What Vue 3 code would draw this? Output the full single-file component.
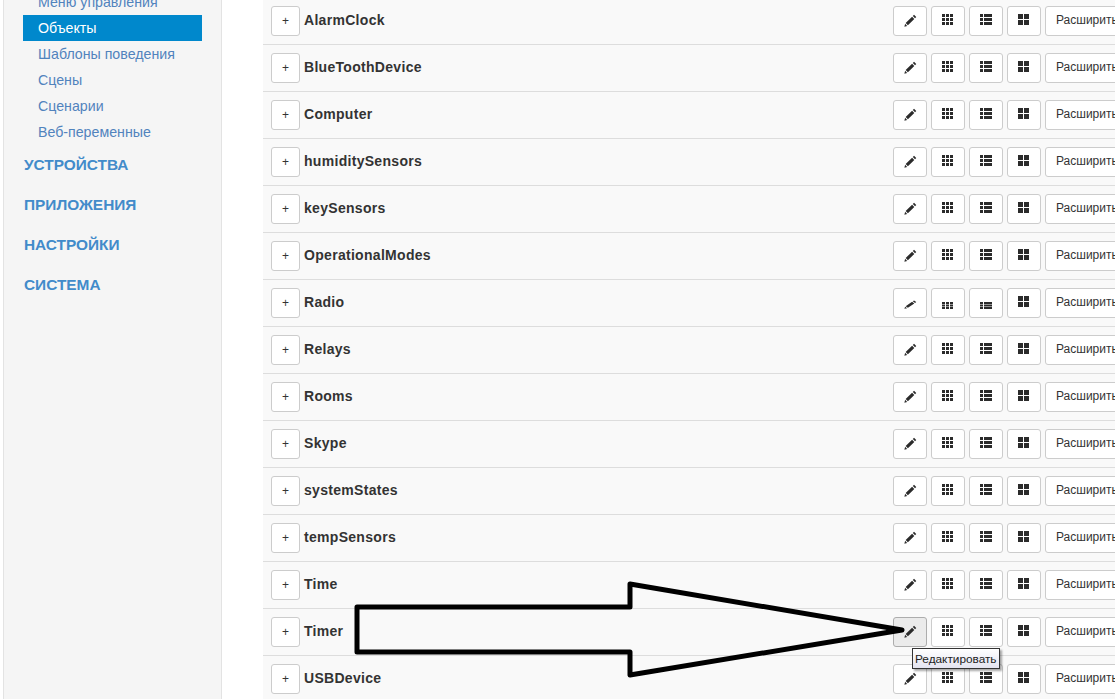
<script setup>
const links = ['Меню управления', 'Объекты', 'Шаблоны поведения', 'Сцены', 'Сценарии', 'Веб-переменные']
const heads = ['УСТРОЙСТВА', 'ПРИЛОЖЕНИЯ', 'НАСТРОЙКИ', 'СИСТЕМА']
const rows = ['AlarmClock', 'BlueToothDevice', 'Computer', 'humiditySensors', 'keySensors', 'OperationalModes', 'Radio', 'Relays', 'Rooms', 'Skype', 'systemStates', 'tempSensors', 'Time', 'Timer', 'USBDevice']
</script>

<template>
  <div class="page">
    <aside class="side">
      <ul class="links">
        <li v-for="l in links" :key="l" :class="{ active: l === 'Объекты' }">{{ l }}</li>
      </ul>
      <h4 v-for="h in heads" :key="h">{{ h }}</h4>
    </aside>
    <main class="list">
      <div v-for="r in rows" :key="r" class="row" :class="{ squash: r === 'Radio' }">
        <button class="btn plus">+</button>
        <b class="name">{{ r }}</b>
        <div class="acts">
          <button class="btn ic" :class="{ hover: r === 'Timer' }">
            <svg viewBox="0 0 14 14" preserveAspectRatio="none" class="g pen"><path d="M10.8 0.8 13.2 3.2 11.9 4.5 9.5 2.1ZM8.7 2.9 11.1 5.3 4.2 12.2 1.8 9.8ZM1.2 10.6 3.4 12.8 0.4 13.6Z"/></svg>
          </button>
          <button class="btn ic">
            <svg viewBox="0 0 11 11" preserveAspectRatio="none" class="g dots"><path d="M0 0h3v3H0zM4 0h3v3H4zM8 0h3v3H8zM0 4h3v3H0zM4 4h3v3H4zM8 4h3v3H8zM0 8h3v3H0zM4 8h3v3H4zM8 8h3v3H8z"/></svg>
          </button>
          <button class="btn ic">
            <svg viewBox="0 0 12 11" preserveAspectRatio="none" class="g lines"><path d="M0 0h3v3H0zM4 0h8v3H4zM0 4h3v3H0zM4 4h8v3H4zM0 8h3v3H0zM4 8h8v3H4z"/></svg>
          </button>
          <button class="btn ic noflat">
            <svg viewBox="0 0 11 11" preserveAspectRatio="none" class="g dots"><path d="M0 0h5v5H0zM6 0h5v5H6zM0 6h5v5H0zM6 6h5v5H6z"/></svg>
          </button>
          <button class="btn wide"><span class="lbl">Расширить</span></button>
        </div>
      </div>
    </main>
    <svg class="arrow" viewBox="0 0 1115 699" width="1115" height="699">
      <path d="M357 607H630V584L902 630 630 675V652H357Z" fill="none" stroke="#000" stroke-width="5" stroke-linejoin="round"/>
    </svg>
    <div class="tip">Редактировать</div>
  </div>
</template>

<style>
html, body { margin: 0; background: #fff; overflow: hidden; }
</style>

<style scoped>
.page {
  position: relative;
  width: 1115px;
  height: 699px;
  overflow: hidden;
  display: flex;
  align-items: flex-start;
  font-family: "Liberation Sans", Arial, sans-serif;
  background: #fff;
}
.side {
  height: 730px;
  margin: -20px 0 0 3px;
  flex: none;
  background: #f5f5f5;
  border: solid #e3e3e3;
  border-width: 0 1px;
  padding: 9px 19px 0;
  box-sizing: content-box;
  width: 179px;
}
.links { list-style: none; margin: 0; padding: 0; }
.links li {
  height: 26px;
  line-height: 26px;
  padding-left: 15px;
  font-size: 14.2px;
  color: #5183bd;
}
.links li.active { background: #0088cc; color: #fff; }
h4 {
  margin: 0;
  height: 40px;
  line-height: 40px;
  font-size: 15.4px;
  font-weight: bold;
  color: #428bca;
  padding-left: 1px;
}
.list {
  margin: -2px 0 0 41px;
  flex: 1;
  min-width: 0;
}
.row {
  height: 46px;
  border-bottom: 1px solid #ddd;
  background: #f9f9f9;
  display: flex;
  align-items: center;
  padding-left: 8px;
}
.btn {
  box-sizing: border-box;
  height: 30px;
  background: #fff;
  border: 1px solid #ccc;
  border-radius: 3px;
  color: #333;
  font-family: inherit;
  font-size: 12px;
  padding: 0;
  display: flex;
  align-items: center;
  justify-content: center;
  flex: none;
}
.plus { width: 29px; }
.name { margin: 0 0 2px 4px; font-size: 14px; letter-spacing: 0.3px; color: #333; }
.acts { margin-left: auto; display: flex; gap: 4px; margin-right: -32px; }
.ic { width: 34px; }
.hover { background: #ebebeb; border-color: #adadad; }
.wide { width: 102px; justify-content: flex-start; padding-left: 10px; }
.lbl { margin-bottom: 2px; }
.g { width: 13px; height: 13px; fill: #2b2b2b; margin-bottom: 2px; flex: none; }
.dots { width: 11px; height: 11px; margin-bottom: 3px; margin-right: 1px; }
.lines { width: 12px; height: 11px; margin-bottom: 3px; }
.squash .ic:not(.noflat) .g { height: 7px; margin-top: 5px; margin-bottom: 0; }
.squash .ic:not(.noflat) .pen { height: 9px; margin-top: 2px; }
.arrow { position: absolute; left: 0; top: 0; pointer-events: none; }
.tip {
  position: absolute;
  left: 912px;
  top: 648px;
  height: 21px;
  line-height: 20px;
  padding: 0 2px;
  box-sizing: border-box;
  width: 88px;
  font-size: 11.8px;
  white-space: nowrap;
  color: #222;
  background: linear-gradient(#fff, #e4e4f0);
  border: 1px solid #333;
  box-shadow: 2px 2px 2px rgba(0,0,0,.35);
}
</style>
